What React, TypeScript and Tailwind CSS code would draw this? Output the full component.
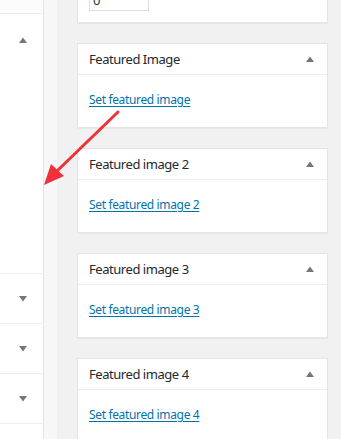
import React from "react";

const Up = () => (
  <svg width="8" height="6" viewBox="0 0 8 6"><path d="M0 6 L4 0.5 L8 6 Z" fill="#72777c" /></svg>
);
const Down = () => (
  <svg width="8" height="6" viewBox="0 0 8 6"><path d="M0 0 L8 0 L4 5.5 Z" fill="#72777c" /></svg>
);

const Box = ({ title, link }: { title: string; link: string }) => (
  <div className="mb-[20px] h-[85px] shrink-0 border border-[#e5e5e5] bg-white shadow-[0_1px_1px_rgba(0,0,0,0.04)]">
    <div className="flex h-[31px] items-center justify-between border-b border-[#eeeeee] pl-[11px] pr-[13px]">
      <span className="text-[13px] leading-[20px] tracking-[-0.45px] text-[#23282d]">{title}</span>
      <Up />
    </div>
    <div className="pl-[11px] pt-[11px]">
      <a href="#" className="text-[12px] leading-[18px] tracking-[-0.35px] text-[#0073aa] underline underline-offset-[2px]">{link}</a>
    </div>
  </div>
);

export default function App() {
  return (
    <div className="relative flex h-[439px] w-[341px] overflow-hidden bg-[#f1f1f1]" style={{ fontFamily: '"Noto Sans", "Open Sans", sans-serif' }}>
      <div className="flex w-[44px] shrink-0 flex-col border-r border-[#e5e5e5] bg-white">
        <div className="h-[13px] shrink-0 bg-[#fcfcfc]" />
        <div className="flex h-[260px] shrink-0 justify-end border-t border-[#eeeeee] pr-[16px] pt-[23px]">
          <Up />
        </div>
        {[0, 1, 2].map((i) => (
          <div key={i} className="flex h-[50px] shrink-0 items-center justify-end border-t border-[#eeeeee] pr-[16px]">
            <Down />
          </div>
        ))}
        <div className="flex-1 border-t border-[#eeeeee]" />
      </div>
      <div className="w-[13px] shrink-0 bg-[#f7f7f7]" />
      <div className="w-[20px] shrink-0" />
      <div className="flex w-[251px] shrink-0 flex-col">
        <div className="mb-[20px] h-[23px] shrink-0 overflow-hidden border border-t-0 border-[#e5e5e5] bg-white shadow-[0_1px_1px_rgba(0,0,0,0.04)]">
          <div className="ml-[11px] mt-[-14px] h-[25px] w-[60px] border border-[#dddddd] pl-[3px] text-[13px] leading-[26px] text-[#32373c]">0</div>
        </div>
        <Box title="Featured Image" link="Set featured image" />
        <Box title="Featured image 2" link="Set featured image 2" />
        <Box title="Featured image 3" link="Set featured image 3" />
        <Box title="Featured image 4" link="Set featured image 4" />
      </div>
      <svg className="pointer-events-none absolute left-0 top-0" width="341" height="439">
        <path d="M118 112 L58 170" stroke="#f0313a" strokeWidth="3" strokeLinecap="round" />
        <path d="M44 185 L51 164 L64 176 Z" fill="#f0313a" />
      </svg>
    </div>
  );
}
